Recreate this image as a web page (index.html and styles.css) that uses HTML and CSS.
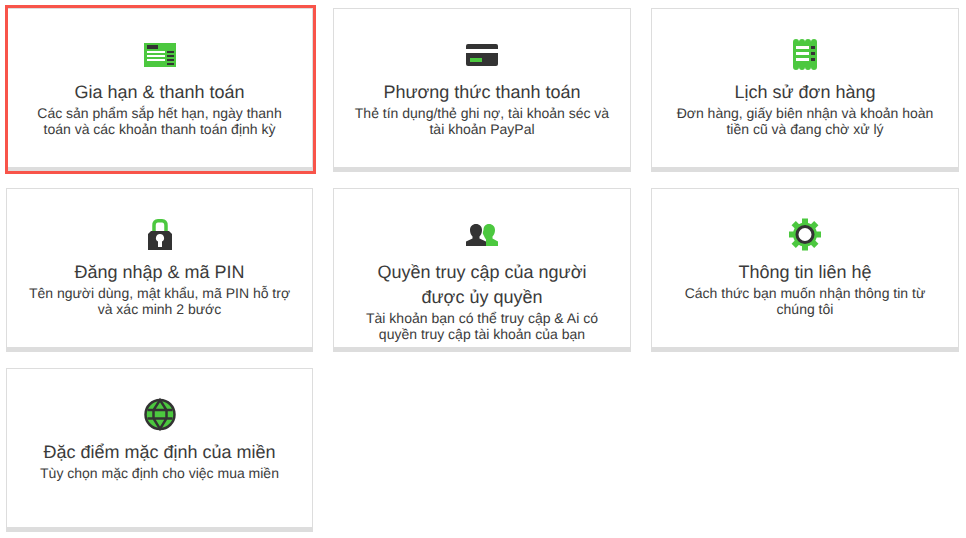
FILE: index.html
```html
<!DOCTYPE html>
<html lang="vi">
<head>
<meta charset="utf-8" />
<title>Tài khoản</title>
<link rel="stylesheet" href="styles.css">
</head>
<body>
<div class="grid">

  <a class="card active">
    <svg class="icon" viewBox="0 0 32 32">
      <rect x="0" y="4" width="32" height="24" fill="#4cc83f"/>
      <rect x="3" y="6" width="11" height="4" fill="#333"/>
      <path d="M3 12h18v2H3zM3 16h18v2H3zM3 20h18v2H3z" fill="#fff"/>
      <path d="M23 12h7v2h-7zM23 16h7v2h-7zM23 20h7v2h-7zM23 24h7v2h-7z" fill="#333"/>
    </svg>
    <h3>Gia hạn &amp; thanh toán</h3>
    <p>Các sản phẩm sắp hết hạn, ngày thanh toán và các khoản thanh toán định kỳ</p>
  </a>

  <a class="card">
    <svg class="icon" viewBox="0 0 32 32">
      <path d="M0 10V7a2 2 0 0 1 2-2h28a2 2 0 0 1 2 2v3z" fill="#333"/>
      <path d="M0 14h32v11a2 2 0 0 1-2 2H2a2 2 0 0 1-2-2z" fill="#333"/>
      <rect x="4" y="19" width="12" height="4" fill="#4cc83f"/>
    </svg>
    <h3>Phương thức thanh toán</h3>
    <p>Thẻ tín dụng/thẻ ghi nợ, tài khoản séc và tài khoản PayPal</p>
  </a>

  <a class="card">
    <svg class="icon" viewBox="0 0 32 32">
      <path d="M4 3a3 3 0 0 1 6 0a3 3 0 0 1 6 0a3 3 0 0 1 6 0a3 3 0 0 1 6 0V28a3 3 0 0 1-6 0a3 3 0 0 1-6 0a3 3 0 0 1-6 0a3 3 0 0 1-6 0z" fill="#4cc83f"/>
      <path d="M7 7h13v3H7zM7 13h13v3H7zM7 19h13v3H7z" fill="#fff"/>
      <path d="M22 7h4v3h-4zM22 13h4v3h-4zM22 19h4v3h-4z" fill="#333"/>
    </svg>
    <h3>Lịch sử đơn hàng</h3>
    <p>Đơn hàng, giấy biên nhận và khoản hoàn tiền cũ và đang chờ xử lý</p>
  </a>

  <a class="card">
    <svg class="icon" viewBox="0 0 32 32">
      <path d="M10 14V6.500Q10 1.750 14 1.750h4q4 0 4 4.750V14" fill="none" stroke="#4cc83f" stroke-width="3.500"/>
      <path d="M7 12h18l3 3v16H4V15z" fill="#333"/>
      <path d="M16 15a4 4 0 0 1 2 7.500V28h-4v-5.500A4 4 0 0 1 16 15z" fill="#fff"/>
    </svg>
    <h3>Đăng nhập &amp; mã PIN</h3>
    <p>Tên người dùng, mật khẩu, mã PIN hỗ trợ và xác minh 2 bước</p>
  </a>

  <a class="card">
    <svg class="icon" viewBox="0 0 32 32">
      <path d="M23 5c3.500 0 6 2.500 6 6 0 3-1 5-2.500 6.500v2L32 22.500V27H20v-6.500l-1-1.500-2-4c-.5-1 0-2 .5-4 0-3.500 2-6 5.500-6z" fill="#4cc83f"/>
      <path d="M10 5c3.500 0 6 2.500 6 6 0 3-1 5-2.500 6.500v2l6.500 3V27H0v-4.500l6.500-3v-2C5 16 4 14 4 11c0-3.500 2.500-6 6-6z" fill="#333"/>
    </svg>
    <h3>Quyền truy cập của người được ủy quyền</h3>
    <p>Tài khoản bạn có thể truy cập &amp; Ai có quyền truy cập tài khoản của bạn</p>
  </a>

  <a class="card">
    <svg class="icon" viewBox="0 0 32 32">
      <g fill="#4cc83f">
        <circle cx="16" cy="15.500" r="12"/>
        <rect x="13" y="-0.500" width="6" height="32"/>
        <rect x="13" y="-0.500" width="6" height="32" transform="rotate(45 16 15.500)"/>
        <rect x="13" y="-0.500" width="6" height="32" transform="rotate(90 16 15.500)"/>
        <rect x="13" y="-0.500" width="6" height="32" transform="rotate(135 16 15.500)"/>
      </g>
      <circle cx="16" cy="15.500" r="8" fill="#fff" stroke="#333" stroke-width="3"/>
    </svg>
    <h3>Thông tin liên hệ</h3>
    <p>Cách thức bạn muốn nhận thông tin từ chúng tôi</p>
  </a>

  <a class="card">
    <svg class="icon" viewBox="0 0 32 32">
      <circle cx="16" cy="15.500" r="14.500" fill="#4cc83f" stroke="#333" stroke-width="2.500"/>
      <path d="M16 1L9.500 11v8.500L16 30l6.500-10.500V11zM3.500 11h25M3.500 19.500h25" fill="none" stroke="#333" stroke-width="2.500"/>
    </svg>
    <h3>Đặc điểm mặc định của miền</h3>
    <p>Tùy chọn mặc định cho việc mua miền</p>
  </a>

</div>
</body>
</html>
```

FILE: styles.css
```css
html{font-size: 14px;font-family: "Liberation Sans", Arial, sans-serif;color: #3b3b3b;text-rendering:geometricPrecision;}
body{margin:0;padding:8px 6px;background:#fff;}

.grid{display:grid;grid-template-columns:307px 298px 308px;grid-auto-rows:164px;column-gap:20px;row-gap:16px;}

/*====================Card=====================*/
.card{display:block;position:relative;box-sizing:border-box;border:1px solid #ddd;border-bottom:5px solid #ddd;padding:30px 20px 0;text-align:center;cursor:pointer;}
.card.active::after{content:"";position:absolute;top:-4px;right:-4px;bottom:-7px;left:-2px;border:3px solid #f8544a;}
.icon{display:block;width:32px;height:32px;margin:0 auto 9px;overflow:visible;}
.card h3{margin:0;padding:0 10px;font-size:18px;font-weight:normal;line-height:25px;}
.card p{margin:0;font-size:14px;line-height:16px;}
/*====================Card End=====================*/
```
